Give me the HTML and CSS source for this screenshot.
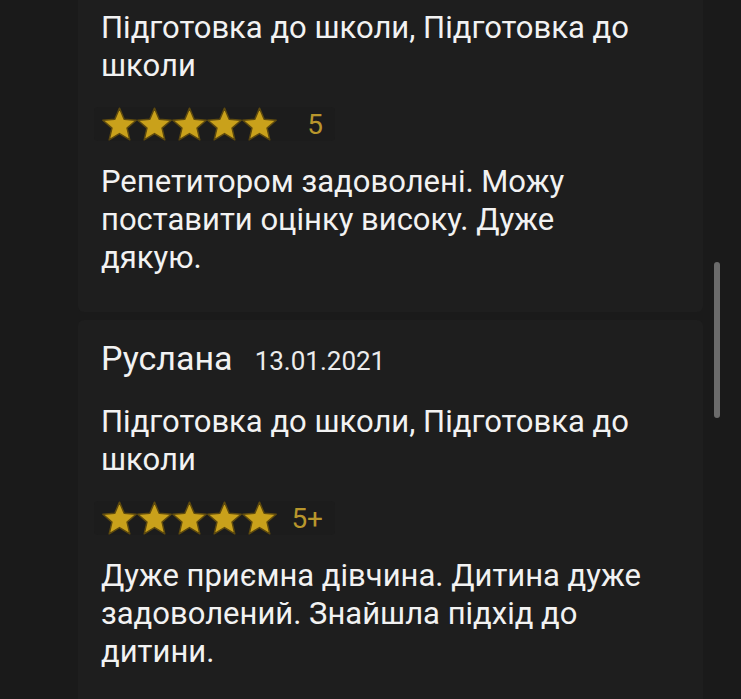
FILE: index.html
```html
<!DOCTYPE html>
<html lang="uk">
<head>
    <meta charset="UTF-8">
    <meta name="viewport" content="width=device-width, initial-scale=1.0">
    <title>Відгуки</title>
    <link rel="stylesheet" href="styles.css">
</head>
<body>
    <div class="screen">
        <div class="reviews">
            <div class="card card-cut">
                <p class="subject">Підготовка до школи, Підготовка до школи</p>
                <div class="rating">
                    <span class="stars">
                        <svg viewBox="1.5 1.5 21 20"><path d="M12 17.27L18.18 21l-1.64-7.03L22 9.24l-7.19-.61L12 2 9.19 8.63 2 9.24l5.46 4.73L5.82 21z"/></svg>
                        <svg viewBox="1.5 1.5 21 20"><path d="M12 17.27L18.18 21l-1.64-7.03L22 9.24l-7.19-.61L12 2 9.19 8.63 2 9.24l5.46 4.73L5.82 21z"/></svg>
                        <svg viewBox="1.5 1.5 21 20"><path d="M12 17.27L18.18 21l-1.64-7.03L22 9.24l-7.19-.61L12 2 9.19 8.63 2 9.24l5.46 4.73L5.82 21z"/></svg>
                        <svg viewBox="1.5 1.5 21 20"><path d="M12 17.27L18.18 21l-1.64-7.03L22 9.24l-7.19-.61L12 2 9.19 8.63 2 9.24l5.46 4.73L5.82 21z"/></svg>
                        <svg viewBox="1.5 1.5 21 20"><path d="M12 17.27L18.18 21l-1.64-7.03L22 9.24l-7.19-.61L12 2 9.19 8.63 2 9.24l5.46 4.73L5.82 21z"/></svg>
                    </span>
                    <span class="mark">5</span>
                </div>
                <p class="text">Репетитором задоволені. Можу поставити оцінку високу. Дуже дякую.</p>
            </div>

            <div class="card">
                <div class="author">
                    <span class="name">Руслана</span>
                    <span class="date">13.01.2021</span>
                </div>
                <p class="subject">Підготовка до школи, Підготовка до школи</p>
                <div class="rating">
                    <span class="stars">
                        <svg viewBox="1.5 1.5 21 20"><path d="M12 17.27L18.18 21l-1.64-7.03L22 9.24l-7.19-.61L12 2 9.19 8.63 2 9.24l5.46 4.73L5.82 21z"/></svg>
                        <svg viewBox="1.5 1.5 21 20"><path d="M12 17.27L18.18 21l-1.64-7.03L22 9.24l-7.19-.61L12 2 9.19 8.63 2 9.24l5.46 4.73L5.82 21z"/></svg>
                        <svg viewBox="1.5 1.5 21 20"><path d="M12 17.27L18.18 21l-1.64-7.03L22 9.24l-7.19-.61L12 2 9.19 8.63 2 9.24l5.46 4.73L5.82 21z"/></svg>
                        <svg viewBox="1.5 1.5 21 20"><path d="M12 17.27L18.18 21l-1.64-7.03L22 9.24l-7.19-.61L12 2 9.19 8.63 2 9.24l5.46 4.73L5.82 21z"/></svg>
                        <svg viewBox="1.5 1.5 21 20"><path d="M12 17.27L18.18 21l-1.64-7.03L22 9.24l-7.19-.61L12 2 9.19 8.63 2 9.24l5.46 4.73L5.82 21z"/></svg>
                    </span>
                    <span class="mark">5+</span>
                </div>
                <p class="text">Дуже приємна дівчина. Дитина дуже задоволений. Знайшла підхід до дитини.</p>
            </div>
        </div>
        <div class="scrollbar"><div class="thumb"></div></div>
    </div>
</body>
</html>
```

FILE: styles.css
```css
html, body {
    margin: 0;
    padding: 0;
    height: 100%;
}
body {
    background-color: #1a1a1a;
    font-family: Roboto, "Noto Sans", sans-serif;
    color: #f2f2f2;
    overflow: hidden;
}
.screen {
    display: flex;
    height: 100%;
}
.reviews {
    display: flex;
    flex-direction: column;
    gap: 8px;
    padding-left: 78px;
    width: 625px;
    flex-shrink: 0;
}
.card {
    background-color: #1e1e1e;
    border-radius: 6px;
    padding: 18px 23px 35px 23px;
}
.card-cut {
    padding-top: 9px;
    border-top-left-radius: 0;
    border-top-right-radius: 0;
}
.author {
    display: flex;
    align-items: baseline;
    gap: 22px;
    height: 40px;
    line-height: 40px;
    margin-bottom: 25px;
}
.name {
    font-size: 34px;
}
.date {
    font-size: 26px;
    color: #ececec;
}
.subject,
.text {
    margin: 0;
    font-size: 31px;
    line-height: 38px;
    padding-right: 30px;
}
.rating {
    display: flex;
    align-items: center;
    width: fit-content;
    margin: 22px 0 22px -7px;
    padding: 0 12px 0 8px;
    height: 34px;
    background-color: #1c1c1c;
    border-radius: 4px;
}
.stars {
    display: flex;
}
.stars svg {
    width: 35px;
    height: 34px;
    fill: #c9a11b;
    stroke: #5e4a0e;
    stroke-width: 0.9;
    stroke-linejoin: round;
}
.mark {
    min-width: 46px;
    text-align: right;
    font-size: 28px;
    color: #b8962c;
}
.scrollbar {
    width: 6px;
    margin-left: 11px;
    padding-top: 262px;
}
.thumb {
    height: 156px;
    background-color: #6b6b6b;
    border-radius: 3px;
}
```
